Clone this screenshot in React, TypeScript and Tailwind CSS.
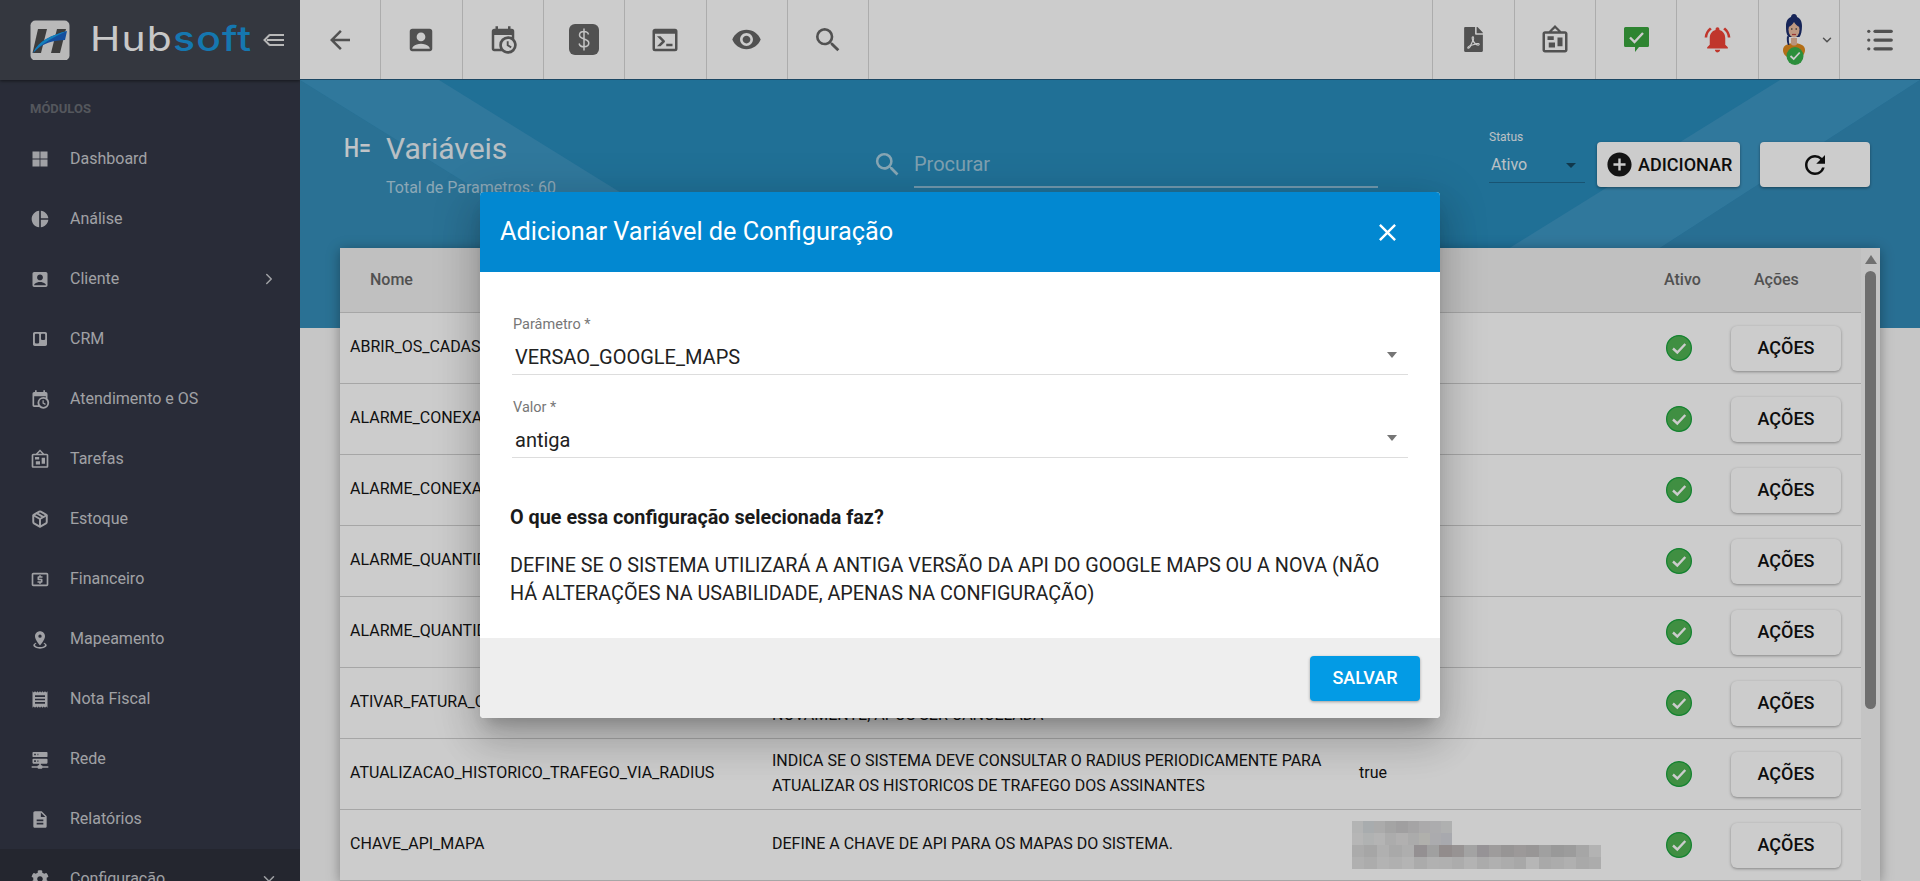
import type { ReactNode } from "react";
import { ChevronDown, ChevronRight, List, Package } from "lucide-react";
import { FaCog, FaFilePdf, FaTrello } from "react-icons/fa";
import {
  MdAccountBox,
  MdAddCircle,
  MdArrowBack,
  MdClose,
  MdDescription,
  MdNotificationsActive,
  MdOutlineLocalAtm,
  MdPieChart,
  MdReceipt,
  MdRefresh,
  MdSearch,
  MdVisibility,
} from "react-icons/md";

function Mdi({ d, size = 30, className }: { d: string; size?: number; className?: string }) {
  return (
    <svg viewBox="0 0 24 24" width={size} height={size} fill="currentColor" className={className}>
      <path d={d} />
    </svg>
  );
}

const GRID = "M3 3h8.500v8.500H3zM12.500 3H21v8.500h-8.500zM3 12.500h8.500V21H3zM12.500 12.500H21V21h-8.500z";
const CALENDAR_CLOCK =
  "M15,13H16.5V15.82L18.94,17.23L18.19,18.53L15,16.69V13M19,8H5V19H9.67C9.24,18.09 9,17.07 9,16A7,7 0 0,1 16,9C17.07,9 18.09,9.24 19,9.67V8M5,21C3.89,21 3,20.1 3,19V5C3,3.89 3.89,3 5,3H6V1H8V3H16V1H18V3H19A2,2 0 0,1 21,5V11.1C22.24,12.36 23,14.09 23,16A7,7 0 0,1 16,23C14.09,23 12.36,22.24 11.1,21H5M16,11.15A4.85,4.85 0 0,0 11.15,16C11.15,18.68 13.32,20.85 16,20.85A4.85,4.85 0 0,0 20.85,16C20.85,13.32 18.68,11.15 16,11.15Z";
const BOARD =
  "M12.04 2.5L9.53 5H14.53L12.04 2.5M4 7V20H20V7H4M12 0L17 5V5L20 5C21.11 5 22 5.89 22 7V20C22 21.11 21.11 22 20 22H4C2.89 22 2 21.11 2 20V7C2 5.89 2.89 5 4 5H7L12 0M7 18V14H12V18H7M14 17V10H18V17H14M6 12V9H11V12H6Z";
const MARKER =
  "M12,2C15.31,2 18,4.66 18,7.95C18,12.41 12,19 12,19C12,19 6,12.41 6,7.95C6,4.66 8.69,2 12,2M12,6A2,2 0 0,0 10,8A2,2 0 0,0 12,10A2,2 0 0,0 14,8A2,2 0 0,0 12,6M20,19C20,21.21 16.42,23 12,23C7.58,23 4,21.21 4,19C4,17.71 5.22,16.56 7.11,15.83L7.75,16.74C6.67,17.19 6,17.81 6,18.5C6,19.88 8.69,21 12,21C15.31,21 18,19.88 18,18.5C18,17.81 17.33,17.19 16.25,16.74L16.89,15.83C18.78,16.56 20,17.71 20,19Z";
const SERVER =
  "M13,19H14A1,1 0 0,1 15,20H22V22H15A1,1 0 0,1 14,23H10A1,1 0 0,1 9,22H2V20H9A1,1 0 0,1 10,19H11V17H4A1,1 0 0,1 3,16V12A1,1 0 0,1 4,11H20A1,1 0 0,1 21,12V16A1,1 0 0,1 20,17H13V19M4,3H20A1,1 0 0,1 21,4V8A1,1 0 0,1 20,9H4A1,1 0 0,1 3,8V4A1,1 0 0,1 4,3M9,7H10V5H9V7M9,15H10V13H9V15M5,5V7H7V5H5M5,13V15H7V13H5Z";
const CONSOLE =
  "M20,19V7H4V19H20M20,3A2,2 0 0,1 22,5V19A2,2 0 0,1 20,21H4A2,2 0 0,1 2,19V5C2,3.89 2.9,3 4,3H20M13,17V15H18V17H13M9.58,13L5.57,9H8.4L11.7,12.3C12.09,12.69 12.09,13.33 11.7,13.72L8.42,17H5.59L9.58,13Z";

const MENU: { label: string; icon: ReactNode; arrow?: "right" | "down" }[] = [
  { label: "Dashboard", icon: <Mdi d={GRID} size={20} /> },
  { label: "Análise", icon: <MdPieChart size={20} /> },
  { label: "Cliente", icon: <MdAccountBox size={21} />, arrow: "right" },
  { label: "CRM", icon: <FaTrello size={16} /> },
  { label: "Atendimento e OS", icon: <Mdi d={CALENDAR_CLOCK} size={21} /> },
  { label: "Tarefas", icon: <Mdi d={BOARD} size={21} /> },
  { label: "Estoque", icon: <Package size={18} strokeWidth={2.6} /> },
  { label: "Financeiro", icon: <MdOutlineLocalAtm size={21} /> },
  { label: "Mapeamento", icon: <Mdi d={MARKER} size={21} /> },
  { label: "Nota Fiscal", icon: <MdReceipt size={21} /> },
  { label: "Rede", icon: <Mdi d={SERVER} size={21} /> },
  { label: "Relatórios", icon: <MdDescription size={21} /> },
  { label: "Configuração", icon: <FaCog size={18} />, arrow: "down" },
];

const ROWS: { name: string; desc: string[]; value?: string; blurred?: boolean }[] = [
  { name: "ABRIR_OS_CADASTRO", desc: [] },
  { name: "ALARME_CONEXAO_LIMITE", desc: [] },
  { name: "ALARME_CONEXAO_TEMPO", desc: [] },
  { name: "ALARME_QUANTIDADE_A", desc: [] },
  { name: "ALARME_QUANTIDADE_B", desc: [] },
  { name: "ATIVAR_FATURA_CANCELADA", desc: ["\u00a0", "NOVAMENTE, APOS SER CANCELADA"] },
  {
    name: "ATUALIZACAO_HISTORICO_TRAFEGO_VIA_RADIUS",
    desc: [
      "INDICA SE O SISTEMA DEVE CONSULTAR O RADIUS PERIODICAMENTE PARA",
      "ATUALIZAR OS HISTORICOS DE TRAFEGO DOS ASSINANTES",
    ],
    value: "true",
  },
  { name: "CHAVE_API_MAPA", desc: ["DEFINE A CHAVE DE API PARA OS MAPAS DO SISTEMA."], blurred: true },
];

// blocos do valor borrado (a chave de api)
const BLUR: string[][] = [
  ["bg-[#e0e2e2]", "bg-[#d2d8da]", "bg-[#d6d6d6]", "bg-[#cdcdcd]", "bg-[#c9c7c9]", "bg-[#cfcdcf]", "bg-[#d6d5d6]", "bg-[#d8d8da]", "bg-[#dbdcdc]"],
  ["bg-[#e4e4e4]", "bg-[#dcdfdf]", "bg-[#e2e2e2]", "bg-[#d8d8d8]", "bg-[#dedcdc]", "bg-[#d6d6d6]", "bg-[#dcdcd8]", "bg-[#d6d6da]", "bg-[#d2d4da]"],
  ["bg-[#d6d6d6]", "bg-[#d0d0d0]", "bg-[#dcdcdc]", "bg-[#d4d4d4]", "bg-[#dadada]", "bg-[#b9b5b7]", "bg-[#c9c9c9]", "bg-[#b7b0b0]", "bg-[#bdb8b8]", "bg-[#cccccc]", "bg-[#bcb8bc]", "bg-[#c6c4c4]", "bg-[#bdbbbb]", "bg-[#c4c0c0]", "bg-[#bebcbc]", "bg-[#c8c8c8]", "bg-[#c0c0c0]", "bg-[#c4c4c4]", "bg-[#d0d0d0]", "bg-[#e0e0e0]"],
  ["bg-[#dcdcdc]", "bg-[#d8d8d8]", "bg-[#e0e0e0]", "bg-[#dcdcdc]", "bg-[#e2e2e2]", "bg-[#d6d6d6]", "bg-[#dedede]", "bg-[#dcdcdc]", "bg-[#d8d8d8]", "bg-[#e0e0e0]", "bg-[#d6d6d6]", "bg-[#dcdcdc]", "bg-[#d8d8d8]", "bg-[#d2d2d2]", "bg-[#e4e4e4]", "bg-[#d4d4d4]", "bg-[#d8d8d8]", "bg-[#dcdcdc]", "bg-[#d4d4d4]", "bg-[#d8d8d8]"],
];

function LogoMark() {
  return (
    <svg viewBox="0 0 40 40" className="h-10 w-10 shrink-0">
      <rect x="0.5" y="0.5" width="39" height="40" rx="5" fill="#e8e8e8" />
      <path d="M8 9h9l-6 24H2.5z" fill="#4d4d4d" />
      <path d="M27 9h9l-6 24h-9z" fill="#4d4d4d" />
      <path d="M3 33C8 21 22 15 37 11l-2 9C24 20 12 23 3 33z" fill="#1a63c6" />
      <path d="M3 33C8 21 22 15 37 11C24 17 12 23 3 33z" fill="#18a0ea" />
    </svg>
  );
}

function CollapseIcon() {
  return (
    <svg viewBox="0 0 21 14" className="ml-[10px] h-[14px] w-[21px] shrink-0" fill="none" stroke="#e6e6e6" strokeWidth="2">
      <path d="M7 1.5 1.5 7 7 12.5" />
      <path d="M4 7h17M7 2h14M7 12h14" />
    </svg>
  );
}

function Sidebar() {
  return (
    <aside className="flex h-full w-[300px] shrink-0 flex-col bg-[#343846] text-[#c9cacf]">
      <div className="flex h-20 shrink-0 items-center bg-[#41454f] pl-[30px] shadow-[0_1px_3px_rgba(0,0,0,0.5)]">
        <LogoMark />
        <div className="ml-5 w-[163px] shrink-0">
          <span className="inline-block origin-left scale-x-[1.2] font-['Inter',sans-serif] text-[34px] font-normal leading-none tracking-[1px]">
            <span className="text-[#fafafa]">Hub</span>
            <span className="font-medium text-[#1b95dc]">soft</span>
          </span>
        </div>
        <CollapseIcon />
      </div>
      <div className="pb-3 pl-[30px] pt-[21px] text-[13px] font-bold leading-4 text-[#6a6d75]">MÓDULOS</div>
      {MENU.map((m) => (
        <div
          key={m.label}
          className={`relative flex h-[60px] shrink-0 items-center pl-[30px] ${m.arrow === "down" ? "bg-[#2d303b]" : ""}`}
        >
          <span className="flex w-5 items-center justify-center">{m.icon}</span>
          <span className="ml-5 text-base">{m.label}</span>
          {m.arrow === "right" && <ChevronRight className="absolute right-[22px] h-[18px] w-[18px]" />}
          {m.arrow === "down" && <ChevronDown className="absolute right-[22px] h-[18px] w-[18px]" />}
        </div>
      ))}
    </aside>
  );
}

function Cell({ children, className = "" }: { children: ReactNode; className?: string }) {
  return (
    <div className={`flex h-full w-[81.33px] shrink-0 items-center justify-center border-r border-[#d8d8d8] ${className}`}>
      {children}
    </div>
  );
}

function DollarBox() {
  return (
    <svg viewBox="0 0 30 31" className="h-[31px] w-[30px]">
      <rect width="30" height="31" rx="6" fill="#666666" />
      <path
        d="M19.5 10.5c-.5-2-2.3-3-4.5-3-2.6 0-4.5 1.4-4.5 3.6 0 5 9.3 2.8 9.3 8 0 2.3-2 3.7-4.8 3.7-2.5 0-4.4-1.1-4.9-3.3M15 4.5v22"
        fill="none"
        stroke="#f5f5f5"
        strokeWidth="1.5"
      />
    </svg>
  );
}

function ChatCheck() {
  return (
    <svg viewBox="0 0 25 25" className="h-[25px] w-[25px]">
      <path d="M1.5 0h22A1.5 1.5 0 0 1 25 1.5v17a1.5 1.5 0 0 1-1.5 1.5H15l-4 5v-5H1.5A1.5 1.5 0 0 1 0 18.5v-17A1.5 1.5 0 0 1 1.5 0z" fill="#3aa53e" />
      <path d="M6 10.5l4.5 4.5 8.5-9" fill="none" stroke="#ffffff" strokeWidth="2.4" />
    </svg>
  );
}

function Avatar() {
  return (
    <svg viewBox="0 0 30 52" className="h-[52px] w-[30px] shrink-0">
      <path d="M4 36c0-5 6-7 11-7s11 2 11 7c0 4-3 7-5 7H9c-2 0-5-3-5-7z" fill="#e08a1c" />
      <path d="M12 24h6v6c-1 2-5 2-6 0z" fill="#e8b89a" />
      <path d="M15 0c2 0 3 1.500 3 3 3 1 5 4 5 9 0 5-1 9-2.500 11H9.500C7 20 7 16 7 12c0-5 2-8 5-9 0-1.500 1-3 3-3z" fill="#1d2f6e" />
      <path d="M9 31c-1-2-1.500-5-1-9l2 1c-.5 3 0 5 .5 8z" fill="#1d2f6e" />
      <ellipse cx="15" cy="15.500" rx="5.500" ry="8" fill="#eebfa2" />
      <path d="M9.500 13c2-.5 4.500-3 5.500-5 1 2 3.500 4.500 5.500 5l1-5-5-3h-4l-3.500 3z" fill="#1d2f6e" />
      <path d="M13 20.500h4" stroke="#c2413c" strokeWidth="1.200" />
      <circle cx="12.800" cy="15" r=".8" fill="#2b2b2b" />
      <circle cx="17.200" cy="15" r=".8" fill="#2b2b2b" />
      <ellipse cx="16" cy="42" rx="8.500" ry="9" fill="#37b24a" />
      <path d="M11.500 42l3.200 3 6-6.500" fill="none" stroke="#ffffff" strokeWidth="1.800" />
    </svg>
  );
}

function Topbar() {
  return (
    <header className="flex h-20 shrink-0 items-stretch border-b border-[#24597c] bg-white text-[#666666]">
      <Cell><MdArrowBack size={30} /></Cell>
      <Cell><MdAccountBox size={30} /></Cell>
      <Cell><Mdi d={CALENDAR_CLOCK} /></Cell>
      <Cell><DollarBox /></Cell>
      <Cell><Mdi d={CONSOLE} /></Cell>
      <Cell><MdVisibility size={31} /></Cell>
      <Cell><MdSearch size={32} /></Cell>
      <div className="flex-1 border-r border-[#d8d8d8]" />
      <Cell><FaFilePdf size={25} /></Cell>
      <Cell><Mdi d={BOARD} /></Cell>
      <Cell><ChatCheck /></Cell>
      <Cell><MdNotificationsActive size={31} className="text-[#f04438]" /></Cell>
      <Cell className="gap-[11px] pl-4">
        <Avatar />
        <ChevronDown className="h-[14px] w-[14px]" strokeWidth={2.5} />
      </Cell>
      <div className="flex w-[80px] shrink-0 items-center justify-center">
        <List className="h-[30px] w-[30px]" strokeWidth={2.6} />
      </div>
    </header>
  );
}

function HeroBackground() {
  return (
    <svg className="absolute inset-0 h-full w-full" viewBox="0 0 1620 248" preserveAspectRatio="none">
      <polygon points="0,0 400,248 0,248" fill="#358eb9" />
      <polygon points="0,0 139,0 539,248 400,248" fill="#3d96c3" />
      <polygon points="1480,0 1620,0 1236,248 1081,248" fill="#3d96c3" />
      <polygon points="1620,0 1620,248 1236,248" fill="#338bb8" />
    </svg>
  );
}

function PageHead() {
  return (
    <section className="relative flex h-[248px] shrink-0 bg-[#288cbc] pt-[58px]">
      <HeroBackground />
      <div className="relative ml-[44px] flex w-[533px] shrink-0 items-start">
        <span className="mt-[1px] inline-block w-[24px] origin-left scale-x-[0.85] text-[25px] font-medium leading-[20px] text-[#f0f6fa]">H=</span>
        <div className="ml-[18px] -mt-[1px]">
          <div className="text-[30px] leading-[24px] text-[#e8f0f5]">Variáveis</div>
          <div className="mt-[17px] text-base leading-5 text-[#b0d2e4]">Total de Parametros: 60</div>
        </div>
      </div>
      <div className="relative -ml-[5px] flex h-[50px] items-start">
        <MdSearch size={31} className="mt-[11px] text-[#a9d0e2]" />
        <div className="ml-[11px] mt-[13px] h-[37px] w-[464px] border-b-2 border-[#8cc0da] text-xl leading-[26px] text-[#9fc9dd]">
          Procurar
        </div>
      </div>
      <div className="relative ml-[111px] flex items-start">
        <div className="w-[96px] border-b border-[#1f6a90] pb-[5px]">
          <div className="-mt-[8px] text-xs leading-[14px] text-[#eaf2f6]">Status</div>
          <div className="mt-[9px] flex h-6 items-center justify-between pl-[2px] pr-[9px] text-base text-[#eaf2f6]">
            Ativo
            <span className="h-0 w-0 border-x-[5px] border-t-[5px] border-x-transparent border-t-[#14465f]" />
          </div>
        </div>
        <button className="ml-3 mt-1 flex h-[45px] w-[143px] items-center rounded bg-white pl-[10px] text-lg font-medium leading-none text-[#111111] shadow-[0_1px_3px_rgba(0,0,0,0.4)]">
          <MdAddCircle size={29} className="-ml-[2px] mr-[4px] shrink-0 text-[#1a1a1a]" />
          ADICIONAR
        </button>
        <button className="ml-5 mt-1 flex h-[45px] w-[110px] items-center justify-center rounded bg-white text-[#111111] shadow-[0_1px_3px_rgba(0,0,0,0.4)]">
          <MdRefresh size={30} />
        </button>
      </div>
    </section>
  );
}

function Check() {
  return (
    <svg viewBox="0 0 26 26" className="h-[26px] w-[26px]">
      <circle cx="13" cy="13" r="12.400" fill="#50b353" stroke="#16a23a" strokeWidth="1.200" />
      <path d="M7 13.500l4.300 4 8-8.500" fill="none" stroke="#ffffff" strokeWidth="2.400" />
    </svg>
  );
}

const TABLE_COLS = "grid grid-cols-[422px_587px_300px_60px_152px]";

function VarTable() {
  return (
    <div className="relative mx-10 -mt-20 flex min-h-0 flex-1 overflow-hidden bg-white shadow-[0_2px_12px_rgba(0,0,0,0.35)]">
      <div className="w-[1521px] shrink-0">
        <div className={`${TABLE_COLS} h-[65px] items-center border-b border-[#d0d0d0] bg-[#f0f0f0] text-base font-medium text-[#666666]`}>
          <div className="pl-[30px]">Nome</div>
          <div />
          <div />
          <div className="pl-[15px]">Ativo</div>
          <div className="pl-[45px]">Ações</div>
        </div>
        {ROWS.map((r) => (
          <div key={r.name} className={`${TABLE_COLS} h-[71px] items-center border-b border-[#d0d0d0] text-base text-[#141414]`}>
            <div className="whitespace-nowrap pb-[3px] pl-[10px]">{r.name}</div>
            <div className="pb-[3px] pl-[10px] leading-[25px]">
              {r.desc.map((l) => (
                <div key={l} className="whitespace-nowrap">{l}</div>
              ))}
            </div>
            {r.blurred ? (
              <div className="ml-[3px] flex w-[249px] flex-col">
                {BLUR.map((blocks, i) => (
                  <div key={i} className={`flex h-3 ${i < 2 ? "w-[100px]" : "w-full"}`}>
                    {blocks.map((b, j) => (
                      <div key={j} className={`h-full flex-1 ${b}`} />
                    ))}
                  </div>
                ))}
              </div>
            ) : (
              <div className="pb-[3px] pl-[10px]">{r.value}</div>
            )}
            <div className="flex justify-center">
              <Check />
            </div>
            <div className="pl-[22px]">
              <button className="h-[45px] w-[110px] rounded-md bg-white text-lg font-medium leading-none text-[#111111] shadow-[0_1px_3px_rgba(0,0,0,0.35)]">
                AÇÕES
              </button>
            </div>
          </div>
        ))}
      </div>
      <div className="flex flex-1 flex-col items-center bg-[#f5f5f5] pt-[7px]">
        <span className="h-0 w-0 border-x-[6px] border-b-[9px] border-x-transparent border-b-[#8c8c8c]" />
        <span className="mt-[7px] h-[438px] w-[11px] rounded-full bg-[#8a8a8a]" />
      </div>
    </div>
  );
}

function SelectField({ label, value, className = "" }: { label: string; value: string; className?: string }) {
  return (
    <div className={`border-b border-[#dddddd] ${className}`}>
      <div className="pl-[1px] text-[14.500px] leading-5 text-[#777777]">{label} *</div>
      <div className="flex h-[39px] items-center justify-between pl-[3px] pr-[11px] pt-[5px] text-xl leading-none text-[#222222]">
        {value}
        <span className="-mt-1 h-0 w-0 border-x-[5px] border-t-[6px] border-x-transparent border-t-[#757575]" />
      </div>
    </div>
  );
}

function ConfigDialog() {
  return (
    <div className="absolute left-[480px] top-[192px] flex h-[526px] w-[960px] flex-col overflow-hidden rounded bg-white shadow-[0_11px_15px_-7px_rgba(0,0,0,0.2),0_24px_38px_3px_rgba(0,0,0,0.14),0_9px_46px_8px_rgba(0,0,0,0.12)]">
      <div className="flex h-20 shrink-0 items-center justify-between bg-[#0288d1] pl-5 pr-[38px] text-white">
        <span className="text-[25.300px]">Adicionar Variável de Configuração</span>
        <MdClose size={29} />
      </div>
      <div className="flex-1 px-8 pt-[43px]">
        <SelectField label="Parâmetro" value="VERSAO_GOOGLE_MAPS" />
        <SelectField label="Valor" value="antiga" className="mt-[23px]" />
        <h3 className="-ml-[2px] mt-[48px] text-[19.800px] font-bold leading-6 text-[#1a1a1a]">O que essa configuração selecionada faz?</h3>
        <p className="-ml-[2px] mt-[22px] w-[900px] text-[19.800px] leading-7 text-[#222222]">
          DEFINE SE O SISTEMA UTILIZARÁ A ANTIGA VERSÃO DA API DO GOOGLE MAPS OU A NOVA (NÃO HÁ ALTERAÇÕES NA USABILIDADE, APENAS NA CONFIGURAÇÃO)
        </p>
      </div>
      <div className="flex h-20 shrink-0 items-center justify-end bg-[#eeeeee] pr-5">
        <button className="h-[45px] w-[110px] rounded bg-[#039be5] text-lg font-medium leading-none text-white shadow-[0_1px_3px_rgba(0,0,0,0.35)]">
          SALVAR
        </button>
      </div>
    </div>
  );
}

export default function App() {
  return (
    <div className="relative flex h-[881px] w-full overflow-hidden bg-[#f8f8f8] font-['Roboto',sans-serif]">
      <Sidebar />
      <main className="flex min-w-0 flex-1 flex-col">
        <Topbar />
        <PageHead />
        <VarTable />
      </main>
      <div className="absolute inset-0 bg-black/20" />
      <ConfigDialog />
    </div>
  );
}
